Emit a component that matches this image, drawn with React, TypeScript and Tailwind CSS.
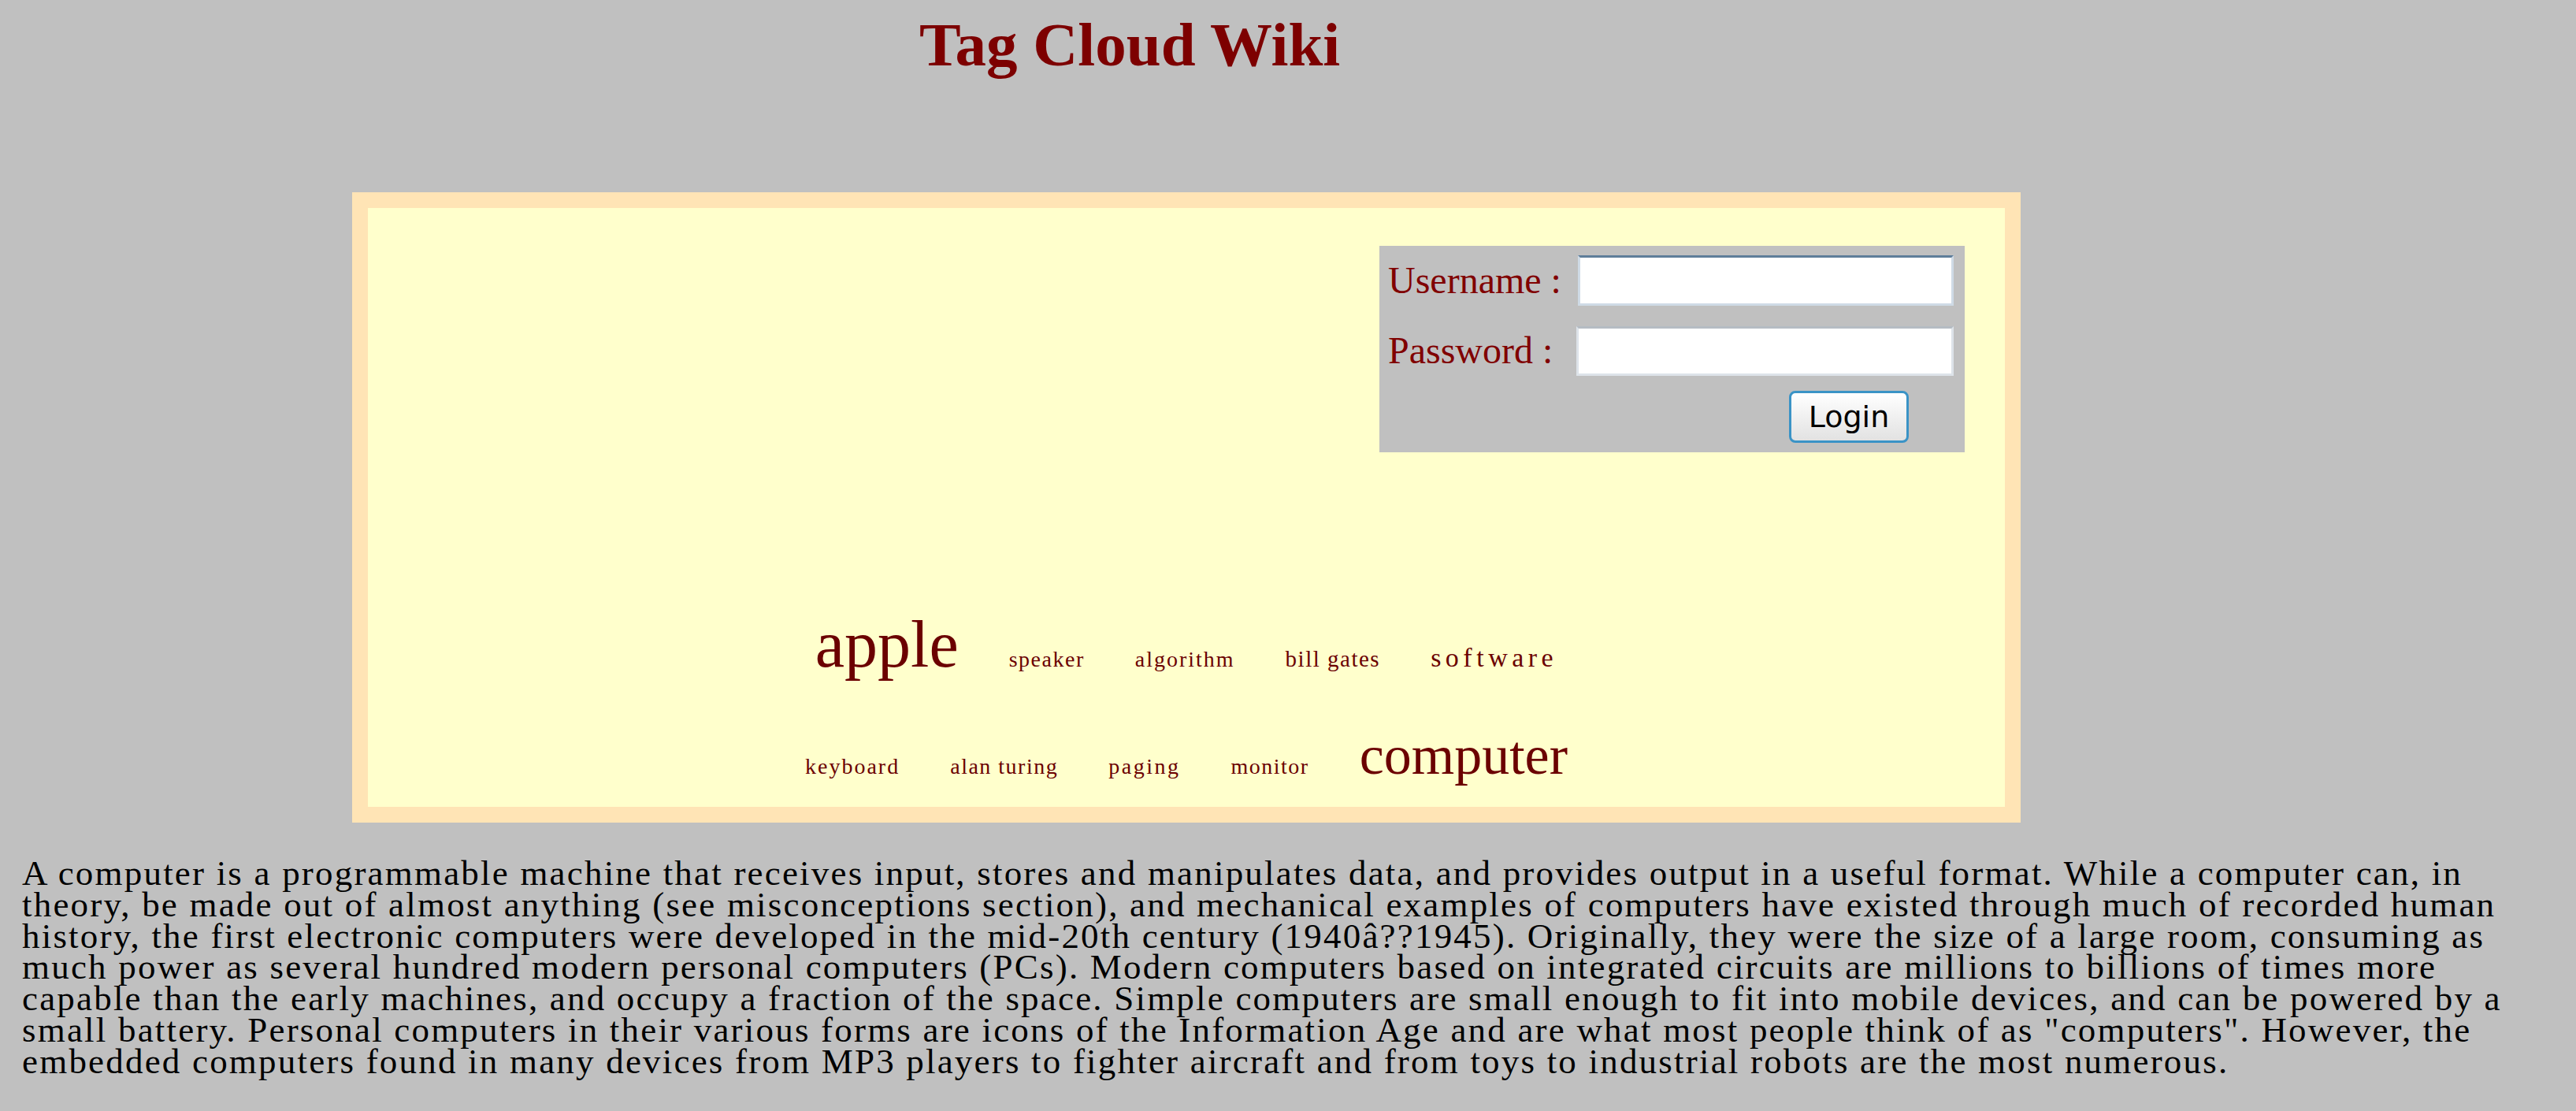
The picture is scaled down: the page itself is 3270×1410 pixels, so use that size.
import React from 'react';

type Tag = { label: string; className: string };

const firstRow: Tag[] = [
  { label: 'apple', className: 'text-[84px]' },
  { label: 'speaker', className: 'text-[28px] tracking-[1.5px]' },
  { label: 'algorithm', className: 'text-[28px] tracking-[2px]' },
  { label: 'bill gates', className: 'text-[29px] tracking-[1.5px]' },
  { label: 'software', className: 'text-[34px] tracking-[5.5px]' },
];

const secondRow: Tag[] = [
  { label: 'keyboard', className: 'text-[28px] tracking-[2px]' },
  { label: 'alan turing', className: 'text-[28px] tracking-[1.5px]' },
  { label: 'paging', className: 'text-[28px] tracking-[2.5px]' },
  { label: 'monitor', className: 'text-[28px] tracking-[1.5px]' },
  { label: 'computer', className: 'text-[70px]' },
];

// line breaks kept as in the original page
const article = [
  'A computer is a programmable machine that receives input, stores and manipulates data, and provides output in a useful format. While a computer can, in',
  'theory, be made out of almost anything (see misconceptions section), and mechanical examples of computers have existed through much of recorded human',
  'history, the first electronic computers were developed in the mid-20th century (1940â??1945). Originally, they were the size of a large room, consuming as',
  'much power as several hundred modern personal computers (PCs). Modern computers based on integrated circuits are millions to billions of times more',
  'capable than the early machines, and occupy a fraction of the space. Simple computers are small enough to fit into mobile devices, and can be powered by a',
  'small battery. Personal computers in their various forms are icons of the Information Age and are what most people think of as "computers". However, the',
  'embedded computers found in many devices from MP3 players to fighter aircraft and from toys to industrial robots are the most numerous.',
];

const TagRow: React.FC<{ tags: Tag[]; className?: string }> = ({ tags, className }) => (
  <div className={`flex items-baseline justify-center gap-[64px] ${className ?? ''}`}>
    {tags.map((t) => (
      <a key={t.label} href="#" className={`leading-none text-[#6b0000] whitespace-nowrap ${t.className}`}>
        {t.label}
      </a>
    ))}
  </div>
);

const LoginBox: React.FC = () => (
  <form
    onSubmit={(e) => e.preventDefault()}
    className="self-end mr-[51px] w-[743px] h-[262px] bg-[#c0c0c0] pl-[11px] pr-[14px] pt-[12px]"
  >
    <div className="flex items-center justify-between h-[64px]">
      <label className="text-[48px] leading-none text-[#800000]">Username :</label>
      <input
        type="text"
        className="w-[477px] h-[64px] bg-white border-[3px] border-[#cfdbe6] border-t-[#5f7e9a] outline-none"
      />
    </div>
    <div className="flex items-center justify-between h-[64px] mt-[25px]">
      <label className="text-[48px] leading-none text-[#800000]">Password :</label>
      <input
        type="password"
        className="w-[479px] h-[63px] bg-white border-[3px] border-[#dde3e9] border-t-[#b5bcc3] outline-none"
      />
    </div>
    <div className="flex justify-end mt-[19px] pr-[57px]">
      <button
        type="submit"
        className="w-[152px] h-[66px] rounded-[8px] border-[3px] border-[#3a93c6] bg-gradient-to-b from-white to-[#e2e2e2] font-['DejaVu_Sans',sans-serif] text-[38px] leading-none text-black"
      >
        Login
      </button>
    </div>
  </form>
);

export default function App() {
  return (
    <div className="min-h-[1410px] w-full bg-[#c0c0c0] font-['Liberation_Serif','Times_New_Roman',serif] pb-[40px]">
      <h1 className="pl-[1167px] pt-[17px] text-[79px] leading-none font-bold text-[#7d0000]">Tag Cloud Wiki</h1>

      <div className="ml-[447px] mt-[148px] w-[2118px] border-[20px] border-[#ffe4b5] bg-[#ffffcc] flex flex-col pt-[48px] pb-[30px]">
        <LoginBox />
        <TagRow tags={firstRow} className="mt-[202px]" />
        <TagRow tags={secondRow} className="mt-[64px]" />
      </div>

      <div className="ml-[28px] mt-[45px] text-[45px] leading-[39.8px] tracking-[2.2px] text-black">
        {article.map((line, i) => (
          <div key={i} className="whitespace-nowrap">
            {line}
          </div>
        ))}
      </div>
    </div>
  );
}
